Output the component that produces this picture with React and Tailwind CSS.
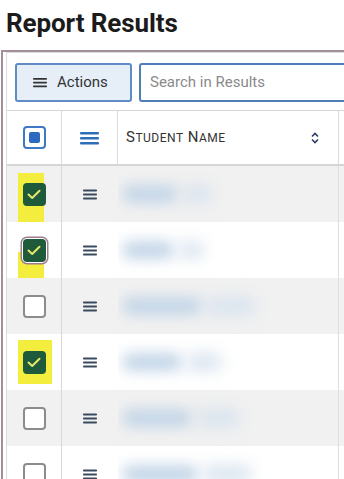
import React from "react";

const rows = [
  { checked: true, hl: "row1", w1: 56, w2: 30 },
  { checked: true, hl: "row2", focus: true, w1: 52, w2: 26 },
  { checked: false, w1: 80, w2: 50 },
  { checked: true, hl: "row4", w1: 60, w2: 36 },
  { checked: false, w1: 70, w2: 44 },
  { checked: false, w1: 76, w2: 50 },
];

function Bars({ className }) {
  return (
    <svg width="19" height="14" viewBox="0 0 19 14" className={className}>
      <rect x="0" y="1" width="19" height="2.4" rx="1" fill="currentColor" />
      <rect x="0" y="6" width="19" height="2.4" rx="1" fill="currentColor" />
      <rect x="0" y="11" width="19" height="2.4" rx="1" fill="currentColor" />
    </svg>
  );
}

function SmallBars() {
  return (
    <svg width="14" height="11" viewBox="0 0 14 11" className="text-[#3b4a5e]">
      <rect x="0" y="0.5" width="14" height="2" rx="0.8" fill="currentColor" />
      <rect x="0" y="4.5" width="14" height="2" rx="0.8" fill="currentColor" />
      <rect x="0" y="8.5" width="14" height="2" rx="0.8" fill="currentColor" />
    </svg>
  );
}

function Checkbox({ checked, focus }) {
  if (checked) {
    return (
      <div className={`relative w-[23px] h-[23px] rounded-[4px] bg-[#1f5a3b] flex items-center justify-center ${focus ? "ring-[1.5px] ring-[#9b7c8c] ring-offset-[1px]" : ""}`}>
        <svg width="14" height="11" viewBox="0 0 14 11">
          <path d="M1.5 5.5 L5.2 9 L12.5 1.8" fill="none" stroke="#e6e86a" strokeWidth="2" strokeLinecap="round" strokeLinejoin="round" />
        </svg>
      </div>
    );
  }
  return <div className="relative w-[23px] h-[23px] rounded-[4px] border-2 border-[#8c8c8c] bg-white" />;
}

export default function App() {
  return (
    <div className="w-[344px] h-[479px] overflow-hidden bg-white font-['Roboto',sans-serif]">
      <h1 className="h-[50px] pl-[6px] pt-[8px] text-[26px] leading-[30px] font-bold text-[#1b1b1b] tracking-[-0.1px]">
        Report Results
      </h1>

      <div className="ml-[1px] border-l-2 border-t-2 border-[#a38f9c] h-[429px]">
        <div className="ml-[3px] border-l border-t border-[#dcdcdc] h-full">
          {/* toolbar */}
          <div className="flex gap-[7px] pt-[10px] pl-[8px] h-[57px]">
            <button className="flex items-center gap-[10px] w-[117px] h-[39px] shrink-0 rounded-[3px] border-2 border-[#5f8cc4] bg-[#e6eef8] pl-[16px] text-[15px] text-[#333]">
              <Bars className="text-[#333] w-[14px] h-[11px]" />
              Actions
            </button>
            <div className="flex items-center w-[230px] h-[39px] shrink-0 rounded-[3px] border-2 border-[#4f7db8] pl-[9px] text-[15px] text-[#8a8a8a]">
              Search in Results
            </div>
          </div>

          {/* header */}
          <div className="flex h-[56px] border-t border-b-2 border-[#d6d6d6]">
            <div className="w-[55px] shrink-0 flex items-center justify-center border-r border-[#dcdcdc]">
              <div className="w-[23px] h-[23px] rounded-[4px] border-2 border-[#3f78c4] flex items-center justify-center">
                <div className="w-[11px] h-[11px] rounded-[2px] bg-[#2c6ac2]" />
              </div>
            </div>
            <div className="w-[56px] shrink-0 flex items-center justify-center border-r border-[#dcdcdc]">
              <Bars className="text-[#2f6db8]" />
            </div>
            <div className="w-[221px] shrink-0 flex items-center justify-between pl-[8px] pr-[19px] border-r border-[#dcdcdc]">
              <span className="text-[15px] text-[#333] tracking-[0.5px]">
                S<span className="text-[12px]">TUDENT</span> N<span className="text-[12px]">AME</span>
              </span>
              <svg width="8" height="12" viewBox="0 0 8 12">
                <path d="M1 4.5 L4 1.5 L7 4.5 M1 7.5 L4 10.5 L7 7.5" fill="none" stroke="#2a3f5f" strokeWidth="1.6" />
              </svg>
            </div>
            <div className="flex-1" />
          </div>

          {/* rows */}
          {rows.map((r, i) => {
            const bg = i % 2 === 0 ? "bg-[#f1f1f1]" : "bg-white";
            return (
              <div key={i} className={`flex h-[56px] ${bg}`}>
                <div className="relative w-[55px] shrink-0 flex items-center justify-center border-r border-[#d8d8d8]">
                  {r.hl === "row1" && <div className="absolute left-[11px] top-[7px] w-[26px] h-[49px] bg-[#f3ee3e]" />}
                  {r.hl === "row2" && <div className="absolute left-[11px] top-[30px] w-[26px] h-[26px] bg-[#f3ee3e]" />}
                  {r.hl === "row4" && <div className="absolute left-[11px] top-[6px] w-[34px] h-[44px] bg-[#f3ee3e]" />}
                  <Checkbox checked={r.checked} focus={r.focus} />
                </div>
                <div className="w-[56px] shrink-0 flex items-center justify-center">
                  <SmallBars />
                </div>
                <div className="w-[221px] shrink-0 flex items-center gap-[4px] pl-[4px] overflow-hidden border-r border-[#dedede]">
                  <div className="h-[18px] rounded-full bg-[#c3d5e7] blur-[7px]" style={{ width: r.w1 }} />
                  <div className="h-[16px] rounded-full bg-[#d6e2ee] blur-[8px]" style={{ width: r.w2 }} />
                </div>
                <div className="flex-1" />
              </div>
            );
          })}
        </div>
      </div>
    </div>
  );
}
